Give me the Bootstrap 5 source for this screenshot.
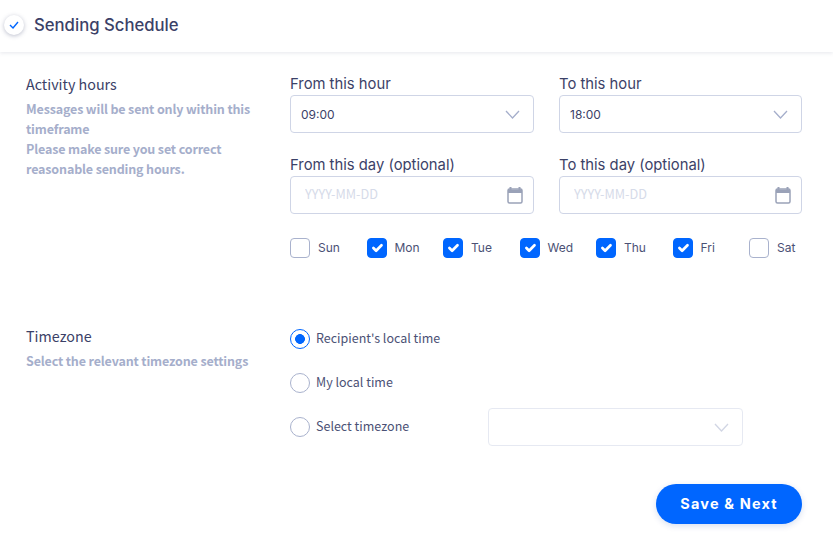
<!DOCTYPE html>
<html lang="en"><head><meta charset="utf-8"><title>Sending Schedule</title>
<link href="https://cdn.jsdelivr.net/npm/bootstrap@5.3.0/dist/css/bootstrap.min.css" rel="stylesheet">
<style>
:root{--ink:#3b4167;--muted:#a5aecb;--line:#cfd5e6;--blue:#0066ff;--geo:Inter,"Liberation Sans",sans-serif;--hum:"Noto Sans CJK SC","Open Sans",sans-serif}
html,body{height:543px;overflow:hidden}
body{background:#fff;color:var(--ink);font-family:var(--hum)}
.top-bar{height:52px;padding:0 0 2px 4px;gap:10px;box-shadow:0 1px 4px rgba(60,70,110,.13)}
.step-dot{width:20px;height:20px;border-radius:50%;background:#fff;box-shadow:0 1px 4px rgba(60,70,110,.35)}
.top-title{font:500 16.7px var(--geo);margin:0;color:var(--ink)}
.sect-a{display:grid;grid-template-columns:264px 1fr;padding:21px 31px 0 26px;height:275px}
.sect-b{display:grid;grid-template-columns:264px 1fr;padding:0 31px 0 26px;height:157px}
.side-title{font-size:14.3px;line-height:20px;margin:-1px 0 5px;font-weight:400}
.sect-a .side-title{margin-top:1px}
.side-note{font-size:12.5px;line-height:20px;font-weight:700;color:var(--muted);margin:0;max-width:235px;letter-spacing:-.15px}
.two-up{display:grid;grid-template-columns:244px 243px;column-gap:25px;row-gap:21px}
.fld-label{font:400 14.8px/20px var(--geo);color:var(--ink);margin:0 0 1px;padding-top:1px;display:block}
.two-up .form-select,.tz-select{height:38px;border:1px solid var(--line);border-radius:4px;font:400 12px var(--geo);color:var(--ink);padding:0 10px;background-position:right 13px center;background-size:15px 9px;
background-image:url("data:image/svg+xml,%3csvg xmlns='http://www.w3.org/2000/svg' viewBox='0 0 15 9'%3e%3cpath fill='none' stroke='%23a5aecb' stroke-width='1.3' d='M1 1l6.5 7L14 1'/%3e%3c/svg%3e")}
.date-wrap{position:relative}
.date-wrap .form-control{height:38px;border:1px solid var(--line);border-radius:4px;padding:0 40px 3px 14px;font:400 12.7px var(--hum);color:var(--ink)}
.date-wrap .form-control::placeholder{color:#d6dbe9;opacity:1}
.cal-ico{position:absolute;right:11px;top:10px;width:16px;height:18px}
.day-row{display:grid;grid-template-columns:repeat(7,76.5px);margin-top:24px;width:535.5px}
.day-item{display:flex;align-items:center;gap:8px;margin:0;font:400 12px/20px var(--geo);color:#4b5175}
.form-check-input.tick{width:20px;height:20px;margin:0;flex:none;border:1px solid #a9b2cd;box-shadow:none}
input.tick[type=checkbox]{border-radius:4px}
input.tick:checked{background-color:var(--blue);border-color:var(--blue)}
input.tick[type=radio]:checked{background-color:#fff;border-color:var(--blue);background-image:radial-gradient(circle,var(--blue) 0,var(--blue) 4.6px,transparent 5.2px);background-size:auto}
.tz-list{display:flex;flex-direction:column;gap:24px;padding-top:2px}
.tz-item{display:flex;align-items:center;gap:6px;font-size:12.5px;line-height:20px;height:20px;margin:0;color:#4b5175;width:198px}
.tz-text{margin-bottom:2px}
.tz-select{width:255px;opacity:.5;flex:none}
.tz-line{height:20px}
.save-wrap{padding-right:31px;justify-content:flex-end}
.save-btn{width:146px;height:40px;border-radius:20px;background:var(--blue);border:0;color:#fff;font:700 14.5px var(--geo);letter-spacing:1.15px;box-shadow:0 2px 6px rgba(0,60,160,.16);padding:0 0 2px}
</style></head>
<body>
<header class="top-bar d-flex align-items-center">
  <span class="step-dot d-flex align-items-center justify-content-center">
    <svg width="10" height="8" viewBox="0 0 10 8"><path d="M1 4l3 3 5-6" fill="none" stroke="#0066ff" stroke-width="1.4"/></svg>
  </span>
  <h1 class="top-title">Sending Schedule</h1>
</header>
<section class="sect-a">
  <div>
    <h2 class="side-title">Activity hours</h2>
    <p class="side-note">Messages will be sent only within this timeframe<br>Please make sure you set correct reasonable sending hours.</p>
  </div>
  <div>
    <div class="two-up">
      <div><label class="fld-label">From this hour</label><select class="form-select"><option>09:00</option></select></div>
      <div><label class="fld-label">To this hour</label><select class="form-select"><option>18:00</option></select></div>
      <div><label class="fld-label">From this day (optional)</label><div class="date-wrap"><input class="form-control" placeholder="YYYY-MM-DD"><svg class="cal-ico" viewBox="0 0 16 18"><path d="M3.500 1v3M12.500 1v3" stroke="#9aa2b8" stroke-width="2"/><rect x="1" y="3" width="14" height="14" rx="1.500" fill="none" stroke="#9aa2b8" stroke-width="1.500"/><path d="M1 3.500h14v3.500H1z" fill="#9aa2b8"/></svg></div></div>
      <div><label class="fld-label">To this day (optional)</label><div class="date-wrap"><input class="form-control" placeholder="YYYY-MM-DD"><svg class="cal-ico" viewBox="0 0 16 18"><path d="M3.500 1v3M12.500 1v3" stroke="#9aa2b8" stroke-width="2"/><rect x="1" y="3" width="14" height="14" rx="1.500" fill="none" stroke="#9aa2b8" stroke-width="1.500"/><path d="M1 3.500h14v3.500H1z" fill="#9aa2b8"/></svg></div></div>
    </div>
    <div class="day-row">
      <label class="day-item"><input class="form-check-input tick" type="checkbox">Sun</label>
      <label class="day-item"><input class="form-check-input tick" type="checkbox" checked>Mon</label>
      <label class="day-item"><input class="form-check-input tick" type="checkbox" checked>Tue</label>
      <label class="day-item"><input class="form-check-input tick" type="checkbox" checked>Wed</label>
      <label class="day-item"><input class="form-check-input tick" type="checkbox" checked>Thu</label>
      <label class="day-item"><input class="form-check-input tick" type="checkbox" checked>Fri</label>
      <label class="day-item"><input class="form-check-input tick" type="checkbox">Sat</label>
    </div>
  </div>
</section>
<section class="sect-b">
  <div>
    <h2 class="side-title">Timezone</h2>
    <p class="side-note">Select the relevant timezone settings</p>
  </div>
  <div class="tz-list">
    <label class="tz-item"><input class="form-check-input tick" type="radio" name="tz" checked><span class="tz-text">Recipient's local time</span></label>
    <label class="tz-item"><input class="form-check-input tick" type="radio" name="tz"><span class="tz-text">My local time</span></label>
    <div class="d-flex align-items-center tz-line">
      <label class="tz-item"><input class="form-check-input tick" type="radio" name="tz"><span class="tz-text">Select timezone</span></label>
      <select class="form-select tz-select"><option></option></select>
    </div>
  </div>
</section>
<div class="d-flex save-wrap"><button class="btn save-btn" type="button">Save &amp; Next</button></div>
</body></html>
